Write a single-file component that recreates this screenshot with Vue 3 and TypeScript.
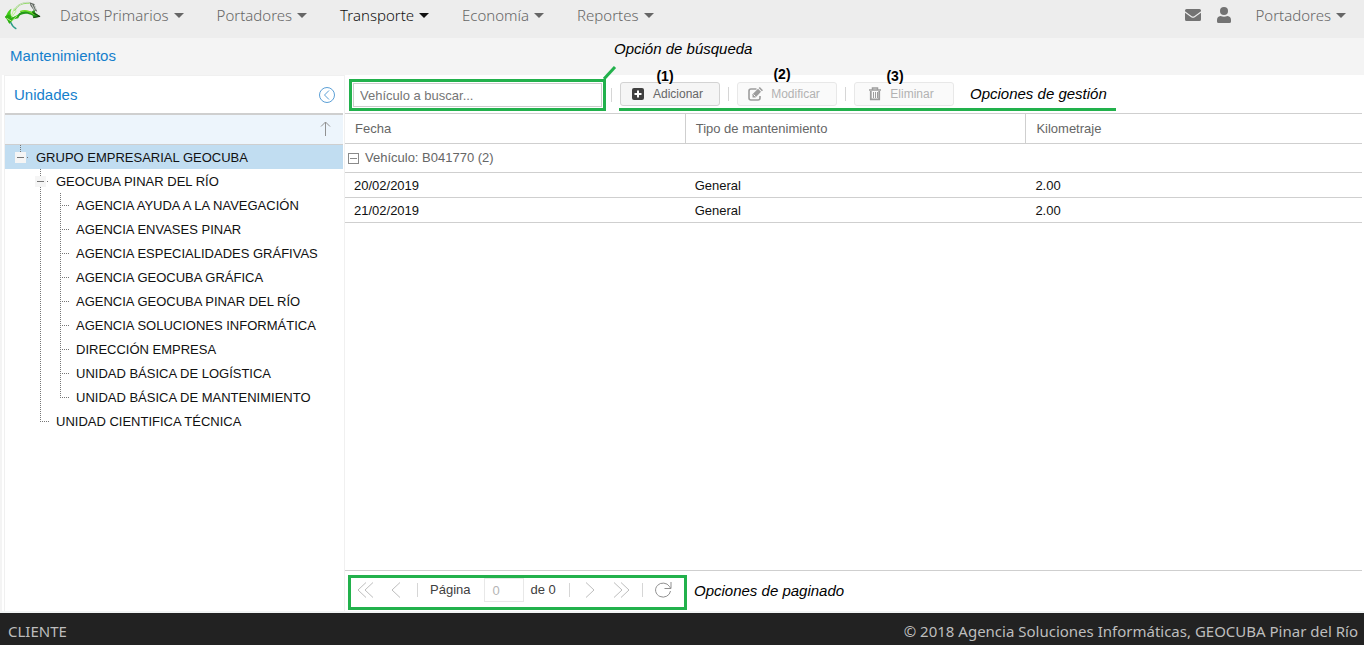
<script setup lang="ts">
import { ref } from 'vue'

type Cell = 'root' | 'branch' | 'line' | 'tee' | 'end'

interface TreeRow {
  label: string
  cells: Cell[]
}

interface Maintenance {
  fecha: string
  tipo: string
  km: string
}

const menus = ['Datos Primarios', 'Portadores', 'Transporte', 'Economía', 'Reportes']
const activeMenu = ref('Transporte')
const selected = ref('GRUPO EMPRESARIAL GEOCUBA')
const search = ref('')
const page = ref('0')

const tree: TreeRow[] = [
  { label: 'GRUPO EMPRESARIAL GEOCUBA', cells: ['root'] },
  { label: 'GEOCUBA PINAR DEL RÍO', cells: ['branch'] },
  { label: 'AGENCIA AYUDA A LA NAVEGACIÓN', cells: ['line', 'tee'] },
  { label: 'AGENCIA ENVASES PINAR', cells: ['line', 'tee'] },
  { label: 'AGENCIA ESPECIALIDADES GRÁFIVAS', cells: ['line', 'tee'] },
  { label: 'AGENCIA GEOCUBA GRÁFICA', cells: ['line', 'tee'] },
  { label: 'AGENCIA GEOCUBA PINAR DEL RÍO', cells: ['line', 'tee'] },
  { label: 'AGENCIA SOLUCIONES INFORMÁTICA', cells: ['line', 'tee'] },
  { label: 'DIRECCIÓN EMPRESA', cells: ['line', 'tee'] },
  { label: 'UNIDAD BÁSICA DE LOGÍSTICA', cells: ['line', 'tee'] },
  { label: 'UNIDAD BÁSICA DE MANTENIMIENTO', cells: ['line', 'end'] },
  { label: 'UNIDAD CIENTIFICA TÉCNICA', cells: ['end'] },
]

const linePaths: Record<Cell, string> = {
  root: 'M10.5 0V7M15 12.5H19',
  branch: 'M10.5 0V24M15 12.5H19',
  line: 'M10.5 0V24',
  tee: 'M10.5 0V24M12 12.5H19',
  end: 'M10.5 0V12M10 12.5H19',
}

const rows: Maintenance[] = [
  { fecha: '20/02/2019', tipo: 'General', km: '2.00' },
  { fecha: '21/02/2019', tipo: 'General', km: '2.00' },
]
</script>

<template>
  <div class="page">
    <header class="navbar">
      <a class="brand" href="#" aria-label="Inicio">
        <svg width="38" height="31" viewBox="0 0 40 32" fill="none">
          <path d="M11 11C14 5 19 2 27 3" stroke="#8fdc62" stroke-width="1.5" />
          <path d="M12 9C16 4 21 2 26 2" stroke="#d5d9d3" stroke-width="1" />
          <path d="M8 9C6 13 7 16 9 18L15 15C14 18 10 21 5 24L3 18L1 19C3 14 5 10 8 9Z" fill="#42cf17" />
          <path d="M1 17L6 25L10 20L15 19L17 15L9 18L5 15Z" fill="#2fae14" />
          <path d="M11 8L8 16M13 11L8 18M3 19L8 22L14 16" stroke="#b8f28a" stroke-width="1" />
          <path d="M7 23Q9 28 13 30" stroke="#2d9b88" stroke-width="1.5" />
          <path d="M14 16C18 10 24 11 29 12L32 10L33 13L38 17L31 19L30 16C24 13 19 14 15 17Z" fill="#23991a" />
          <path d="M17 12Q24 9 32 15" stroke="#69db25" stroke-width="1.5" />
          <path d="M30 13L38 17L31 18" stroke="#15340f" stroke-width="1" />
          <path d="M27 2L32 4L35 12L31 10L28 6Z" fill="#636963" />
          <path d="M29 4L32 10M32 5L34 10" stroke="#d9ddd9" stroke-width="1" />
        </svg>
      </a>
      <nav class="menu" aria-label="Principal">
        <button
          v-for="m in menus"
          :key="m"
          type="button"
          class="menu-item"
          :class="{ active: m === activeMenu }"
          @click="activeMenu = m"
        >
          {{ m }}<span class="caret"></span>
        </button>
      </nav>
      <div class="user">
        <button type="button" class="icon-btn" aria-label="Mensajes">
          <svg width="16" height="12" viewBox="0 0 16 12" fill="#737373">
            <path d="M1.5 0h13A1.5 1.5 0 0 1 16 1.5V2.3L9.2 7.2Q8 8 6.8 7.2L0 2.3V1.5A1.5 1.5 0 0 1 1.5 0Z" />
            <path d="M0 3.7L6.2 8.2Q8 9.4 9.8 8.2L16 3.7V10.5A1.5 1.5 0 0 1 14.5 12H1.5A1.5 1.5 0 0 1 0 10.5Z" />
          </svg>
        </button>
        <button type="button" class="icon-btn" aria-label="Usuario">
          <svg width="14" height="16" viewBox="0 0 14 16" fill="#737373">
            <circle cx="7" cy="4" r="4" />
            <path d="M3.5 9Q7 10.5 10.5 9Q14 9.5 14 13V14.5Q14 16 12.5 16H1.5Q0 16 0 14.5V13Q0 9.5 3.5 9Z" />
          </svg>
        </button>
        <button type="button" class="menu-item">Portadores<span class="caret"></span></button>
      </div>
    </header>

    <div class="titlebar">
      <h1>Mantenimientos</h1>
      <span class="note note-search">Opción de búsqueda</span>
    </div>

    <main class="body">
      <aside class="units">
        <div class="units-head">
          <h2>Unidades</h2>
          <button type="button" class="icon-btn" aria-label="Contraer">
            <svg width="16" height="16" viewBox="0 0 16 16" fill="none" stroke="#5b9fd6">
              <circle cx="8" cy="8" r="7.5" />
              <path d="M10 3.5L5.5 8L10 12.5" />
            </svg>
          </button>
        </div>
        <button type="button" class="sort" aria-label="Ordenar">
          <svg width="11" height="15" viewBox="0 0 11 15" fill="none" stroke="#919191">
            <path d="M5.5 15V1M1 5.5L5.5 1L10 5.5" />
          </svg>
        </button>
        <ul class="tree" role="tree">
          <li
            v-for="row in tree"
            :key="row.label"
            role="treeitem"
            class="node"
            :class="{ selected: row.label === selected }"
            @click="selected = row.label"
          >
            <svg v-for="(c, i) in row.cells" :key="i" width="20" height="24" viewBox="0 0 20 24" fill="none">
              <path :d="linePaths[c]" stroke="#777" stroke-dasharray="1 1" />
              <g v-if="c === 'root' || c === 'branch'">
                <rect x="5" y="7" width="11" height="11" fill="#f5f5f5" />
                <path d="M7 12.5H14" stroke="#777" />
              </g>
            </svg>
            <span>{{ row.label }}</span>
          </li>
        </ul>
      </aside>

      <section class="grid">
        <div class="toolbar">
          <div class="search-frame">
            <input v-model="search" type="text" aria-label="Vehículo a buscar" placeholder="Vehículo a buscar..." />
            <svg class="leader" width="14" height="14" viewBox="0 0 14 14" fill="none">
              <path d="M1 13L12 1" stroke="#22b14c" stroke-width="3" />
            </svg>
          </div>
          <span class="sep"></span>
          <div class="actions">
            <div class="action">
              <b class="num">(1)</b>
              <button type="button" class="btn">
                <svg width="14" height="14" viewBox="0 0 14 14">
                  <rect x="1" y="1" width="12" height="12" rx="2" fill="#404040" />
                  <path d="M7 3.5V10.5M3.5 7H10.5" stroke="#fff" stroke-width="2" />
                </svg>
                <span>Adicionar</span>
              </button>
            </div>
            <span class="sep"></span>
            <div class="action">
              <b class="num high">(2)</b>
              <button type="button" class="btn" disabled>
                <svg width="15" height="14" viewBox="0 0 15 14" fill="none">
                  <path d="M8.5 2H3Q1 2 1 4V11Q1 13 3 13H10Q12 13 12 11V9" stroke="#9d9d9d" stroke-width="1.6" />
                  <path d="M4.5 10.5V7.3L10 1.8L13 4.8L7.5 10.5Z" fill="#9d9d9d" />
                  <path d="M10.7 1.1L11.8 0L15 3.2L13.8 4.2Z" fill="#9d9d9d" />
                  <path d="M5.5 7.5L7.5 9.5" stroke="#f9f9f9" />
                </svg>
                <span>Modificar</span>
              </button>
            </div>
            <span class="sep"></span>
            <div class="action">
              <b class="num">(3)</b>
              <button type="button" class="btn" disabled>
                <svg width="14" height="14" viewBox="0 0 14 14" fill="none" stroke="#9d9d9d">
                  <path d="M1 3H13M4.5 2.5V1H9.5V2.5" stroke-width="1.5" />
                  <path d="M2.8 4V12.3H11.2V4" stroke-width="1.8" />
                  <path d="M5.5 5V11M7.5 5V11M9.5 5V11" />
                </svg>
                <span>Eliminar</span>
              </button>
            </div>
            <span class="note note-actions">Opciones de gestión</span>
          </div>
        </div>

        <table class="data">
          <colgroup>
            <col class="wide" />
            <col class="wide" />
            <col />
          </colgroup>
          <thead>
            <tr>
              <th scope="col">Fecha</th>
              <th scope="col">Tipo de mantenimiento</th>
              <th scope="col">Kilometraje</th>
            </tr>
          </thead>
          <tbody>
            <tr class="group">
              <td colspan="3">
                <button type="button" class="group-btn">
                  <svg width="11" height="11" viewBox="0 0 11 11" fill="none" stroke="#8a8a8a">
                    <rect x=".5" y=".5" width="10" height="10" />
                    <path d="M2 5.5H9" />
                  </svg>
                  <span>Vehículo: B041770 (2)</span>
                </button>
              </td>
            </tr>
            <tr v-for="r in rows" :key="r.fecha">
              <td>{{ r.fecha }}</td>
              <td>{{ r.tipo }}</td>
              <td>{{ r.km }}</td>
            </tr>
          </tbody>
        </table>

        <div class="pager">
          <div class="pager-frame">
            <button type="button" class="icon-btn first" aria-label="Primera página" disabled>
              <svg width="17" height="16" viewBox="0 0 17 16" fill="none" stroke="#bdbdbd">
                <path d="M9 0.5L1 8L9 15.5M16 0.5L8 8L16 15.5" />
              </svg>
            </button>
            <button type="button" class="icon-btn prev" aria-label="Página anterior" disabled>
              <svg width="10" height="16" viewBox="0 0 10 16" fill="none" stroke="#bdbdbd">
                <path d="M9 0.5L1 8L9 15.5" />
              </svg>
            </button>
            <span class="sep"></span>
            <label for="page">Página</label>
            <input id="page" v-model="page" type="text" disabled />
            <span class="total">de 0</span>
            <span class="sep"></span>
            <button type="button" class="icon-btn next" aria-label="Página siguiente" disabled>
              <svg width="10" height="16" viewBox="0 0 10 16" fill="none" stroke="#bdbdbd">
                <path d="M1 0.5L9 8L1 15.5" />
              </svg>
            </button>
            <button type="button" class="icon-btn last" aria-label="Última página" disabled>
              <svg width="17" height="16" viewBox="0 0 17 16" fill="none" stroke="#bdbdbd">
                <path d="M1 0.5L9 8L1 15.5M8 0.5L16 8L8 15.5" />
              </svg>
            </button>
            <span class="sep"></span>
            <button type="button" class="icon-btn refresh" aria-label="Actualizar">
              <svg width="17" height="16" viewBox="0 0 17 16" fill="none" stroke="#8f8f8f">
                <path d="M15.5 9A7.5 7 0 1 1 14.5 4.5L15.5 6" />
                <path d="M16 0V6.5H9.5" />
              </svg>
            </button>
          </div>
          <span class="note">Opciones de paginado</span>
        </div>
      </section>
    </main>

    <footer class="footer">
      <span>CLIENTE</span>
      <span>© 2018 Agencia Soluciones Informáticas, GEOCUBA Pinar del Río</span>
    </footer>
  </div>
</template>

<style>
body {
  margin: 0;
}
</style>

<style scoped>
.page {
  display: flex;
  flex-direction: column;
  min-height: 100vh;
  background: #fff;
  color: #111;
  font: 13px/16px 'Liberation Sans', Arial, sans-serif;
}
.page * {
  box-sizing: border-box;
}
svg {
  display: block;
  flex: none;
}
button {
  font: inherit;
  color: inherit;
  background: none;
  border: 0;
  padding: 0;
  cursor: pointer;
}
button:disabled {
  cursor: default;
}

.navbar {
  display: flex;
  height: 38px;
  padding: 0 18px 8px 4px;
  background: #ededed;
}
.brand {
  width: 56px;
}
.menu {
  display: flex;
  gap: 33px;
}
.menu-item {
  display: flex;
  align-items: center;
  gap: 5px;
  font: 300 15px/24px 'Noto Sans', 'Open Sans', sans-serif;
  color: #666;
  white-space: nowrap;
}
.menu-item.active {
  color: #111;
}
.caret {
  border: 5px solid transparent;
  border-top-color: currentColor;
  border-bottom: 0;
}
.user {
  display: flex;
  align-items: center;
  gap: 16px;
  margin-left: auto;
}
.user .menu-item {
  margin-left: 9px;
}

.titlebar {
  position: relative;
  display: flex;
  align-items: center;
  height: 37px;
  padding: 0 10px 2px;
  background: #f4f4f4;
}
h1,
h2 {
  margin: 0;
  font-size: 15px;
  line-height: 20px;
  font-weight: 400;
  color: #157fcc;
}
.note {
  font-size: 15px;
  line-height: 20px;
  font-style: italic;
  color: #000;
  white-space: nowrap;
}
.note-search {
  position: absolute;
  left: 614px;
  top: 1px;
}

.body {
  flex: 1;
  display: flex;
  padding-right: 2px;
  border-left: 2px solid #f4f4f4;
  border-bottom: 2px solid #f2f5f5;
}
.units {
  flex: none;
  width: 341px;
  margin-left: 2px;
  padding-right: 1px;
  border: 1px solid #f0f0f0;
  border-bottom: 0;
}
.units-head {
  display: flex;
  align-items: center;
  justify-content: space-between;
  height: 39px;
  padding: 0 8px 0 9px;
  border-bottom: 2px solid #cfcfcf;
}
.sort {
  display: flex;
  justify-content: flex-end;
  align-items: center;
  width: 100%;
  height: 30px;
  padding: 0 12px 2px;
  background: #edf5fc;
  border-bottom: 1px solid #cfcfcf;
}
.tree {
  list-style: none;
  margin: 0;
  padding: 0;
}
.node {
  display: flex;
  align-items: center;
  height: 24px;
  padding-left: 5px;
  cursor: pointer;
}
.node:nth-child(n + 2) {
  padding-left: 25px;
}
.node span {
  margin-left: 6px;
  padding-top: 2px;
  white-space: nowrap;
}
.node.selected {
  background: #c1ddf1;
}

.grid {
  flex: 1;
  min-width: 0;
  display: flex;
  flex-direction: column;
}
.toolbar {
  display: flex;
  align-items: center;
  height: 39px;
  padding: 2px 0 0 4px;
  border-bottom: 1px solid #cfcfcf;
}
.search-frame {
  position: relative;
  width: 257px;
  padding: 1px;
  border: 3px solid #22b14c;
}
.leader {
  position: absolute;
  right: -14px;
  top: -16px;
}
.search-frame input {
  display: block;
  width: 100%;
  height: 24px;
  padding: 0 6px;
  border: 1px solid #ccc;
  font: inherit;
  color: #333;
}
.search-frame input::placeholder {
  color: #757575;
  opacity: 1;
}
.sep {
  flex: none;
  width: 1px;
  height: 14px;
  background: #d6d6d6;
}
.toolbar > .sep {
  margin: 0 7px 0 5px;
}
.actions {
  display: flex;
  align-items: center;
  gap: 8px;
  height: 32px;
  padding: 1px 9px 0 1px;
  border-bottom: 3px solid #22b14c;
}
.action {
  position: relative;
}
.num {
  position: absolute;
  left: 0;
  right: 0;
  top: -14px;
  padding-right: 10px;
  font-size: 14px;
  line-height: 16px;
  text-align: center;
  color: #000;
  pointer-events: none;
}
.num.high {
  top: -16px;
}
.action:last-of-type .num {
  padding-right: 18px;
}
.btn {
  display: flex;
  align-items: center;
  justify-content: center;
  gap: 8px;
  width: 100px;
  height: 24px;
  padding-right: 6px;
  border: 1px solid #d3d3d3;
  border-radius: 3px;
  background: #f5f5f5;
  font-size: 12px;
  color: #666;
}
.btn:disabled {
  border-color: #e8e8e8;
  background: #fafafa;
  color: #b2b2b2;
}
.note-actions {
  margin-left: 8px;
}

.data {
  width: 100%;
  table-layout: fixed;
  border-collapse: separate;
  border-spacing: 0;
}
.wide {
  width: 33.5%;
}
.data th {
  height: 30px;
  padding: 0 10px;
  border-bottom: 1px solid #cfcfcf;
  border-right: 1px solid #cfcfcf;
  font-weight: 400;
  text-align: left;
  color: #666;
}
.data th:last-child {
  border-right: 0;
}
.data td {
  height: 25px;
  padding: 1px 9px 0;
  border-bottom: 1px solid #cfcfcf;
}
.data .group td {
  height: 29px;
  padding: 0 3px;
}
.group-btn {
  display: flex;
  align-items: center;
  gap: 6px;
  color: #666;
}

.pager {
  display: flex;
  align-items: center;
  gap: 7px;
  height: 41px;
  margin-top: auto;
  padding-left: 3px;
  border-top: 1px solid #cfcfcf;
}
.pager-frame {
  display: flex;
  align-items: center;
  align-self: flex-end;
  width: 339px;
  height: 35px;
  margin-bottom: 1px;
  padding: 0 12px 5px 6px;
  border: 3px solid #22b14c;
  color: #404040;
}
.prev {
  margin: 0 16px 0 17px;
}
.pager-frame label {
  margin: 0 14px 0 12px;
}
.pager-frame input {
  width: 40px;
  height: 24px;
  padding: 0 7px;
  border: 1px solid #e8e8e8;
  background: #fff;
  font: inherit;
  color: #b5b5b5;
}
.total {
  margin: 0 13px 0 6px;
}
.next {
  margin: 0 18px 0 15px;
}
.last {
  margin-right: 12px;
}
.refresh {
  margin-left: auto;
}

.footer {
  display: flex;
  align-items: center;
  justify-content: space-between;
  height: 32px;
  padding: 4px 6px 0 8px;
  background: #222;
  color: #bdbdbd;
  font: 15px/20px 'Noto Sans', 'Open Sans', sans-serif;
}
</style>
